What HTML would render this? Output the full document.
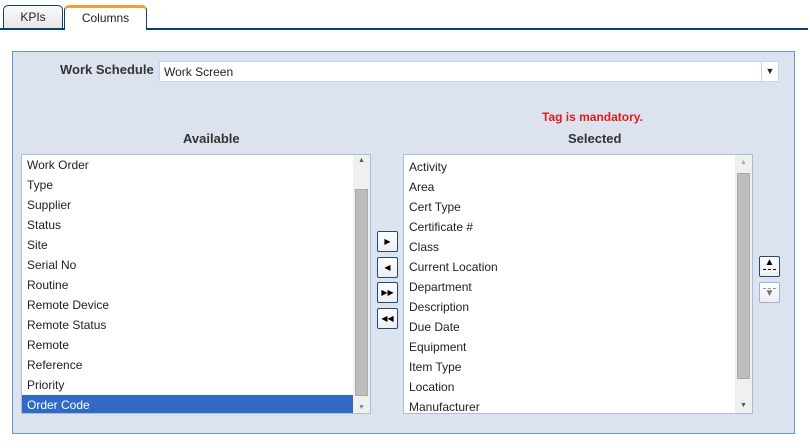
<!DOCTYPE html>
<html><head><style>
*{box-sizing:border-box;margin:0;padding:0}
body{width:810px;height:448px;background:#fff;font-family:"Segoe UI","Liberation Sans",sans-serif;font-size:12px;color:#222;position:relative;overflow:hidden}
.a{position:absolute}
.tab{position:absolute;top:5px;height:24px;border:1px solid #0e3f73;border-bottom:none;border-radius:5px 5px 0 0;text-align:center;line-height:22px;font-size:12px}
.list{position:absolute;background:#fff;border:1px solid #a8bfdc;overflow:hidden}
.list div.i{height:20px;line-height:20px;padding-left:5px;font-size:12px;color:#222}
.sb{position:absolute;top:0;right:0;width:17px;bottom:0;background:#f0f0f0}
.th{position:absolute;left:2px;width:13px;background:#bdbdbd;border:1px solid #a9a9a9}
.btn{position:absolute;width:21px;height:21px;background:linear-gradient(#fff,#eee);border:1px solid #1f4a7a;border-radius:2px;font-size:8px;text-align:center;line-height:19px;color:#000}
</style></head><body>
<div class="a" style="left:0;top:28px;width:808px;height:2px;background:#0e3f73"></div>
<div class="tab" style="left:3px;width:60px;background:linear-gradient(#fafafa,#e6e6e6);border-bottom:2px solid #0e3f73;height:25px">KPIs</div>
<div class="tab" style="left:64px;width:83px;background:#fff;border-top:3px solid #f0a030;height:25px;line-height:20px;border-left:1px solid #0e3f73;border-right:1px solid #0e3f73">Columns</div>

<div class="a" style="left:12px;top:51px;width:783px;height:383px;background:#dce3ee;border:1px solid #6a96d0"></div>
<div class="a" style="left:60px;top:62px;font-weight:bold;font-size:13px;color:#333">Work Schedule</div>
<div class="a" style="left:159px;top:61px;width:620px;height:21px;background:#fff;border:1px solid #c6d6ee;padding-left:4px;line-height:21px">Work Screen
<div class="a" style="right:0;top:0;width:17px;height:19px;border-left:1px solid #c6d6ee;font-size:9px;text-align:center;line-height:19px">▼</div></div>

<div class="a" style="left:542px;top:110px;color:#e01b1b;font-weight:bold;font-size:12px">Tag is mandatory.</div>
<div class="a" style="left:183px;top:131px;font-weight:bold;font-size:13px;color:#333">Available</div>
<div class="a" style="left:568px;top:131px;font-weight:bold;font-size:13px;color:#333">Selected</div>

<div class="list" style="left:21px;top:154px;width:350px;height:260px">
<div class="i">Work Order</div><div class="i">Type</div><div class="i">Supplier</div><div class="i">Status</div><div class="i">Site</div><div class="i">Serial No</div><div class="i">Routine</div><div class="i">Remote Device</div><div class="i">Remote Status</div><div class="i">Remote</div><div class="i">Reference</div><div class="i">Priority</div>
<div class="i" style="background:#316ac5;color:#fff;margin-right:17px">Order Code</div>
<div class="sb"><div class="a" style="left:5px;top:2px;font-size:7px;color:#555">▲</div><div class="th" style="top:34px;height:207px"></div><div class="a" style="left:5px;bottom:2px;font-size:7px;color:#888">▼</div></div>
</div>

<div class="list" style="left:403px;top:154px;width:350px;height:260px;padding-top:2px">
<div class="i">Activity</div><div class="i">Area</div><div class="i">Cert Type</div><div class="i">Certificate #</div><div class="i">Class</div><div class="i">Current Location</div><div class="i">Department</div><div class="i">Description</div><div class="i">Due Date</div><div class="i">Equipment</div><div class="i">Item Type</div><div class="i">Location</div><div class="i">Manufacturer</div>
<div class="sb"><div class="a" style="left:5px;top:4px;font-size:7px;color:#aaa">▲</div><div class="th" style="top:18px;height:206px"></div><div class="a" style="left:5px;bottom:4px;font-size:7px;color:#555">▼</div></div>
</div>

<div class="btn" style="left:377px;top:231px">▶</div>
<div class="btn" style="left:377px;top:257px">◀</div>
<div class="btn" style="left:377px;top:282px">▶▶</div>
<div class="btn" style="left:377px;top:308px">◀◀</div>

<div class="btn" style="left:759px;top:256px;line-height:12px;font-size:10px">▲<div style="border-top:1px dashed #000;margin:0 3px"></div></div>
<div class="btn" style="left:759px;top:282px;border-color:#9bb3d1;color:#777;line-height:10px;padding-top:5px;font-size:10px"><div style="border-top:1px dashed #999;margin:0 3px"></div>▼</div>
</body></html>
